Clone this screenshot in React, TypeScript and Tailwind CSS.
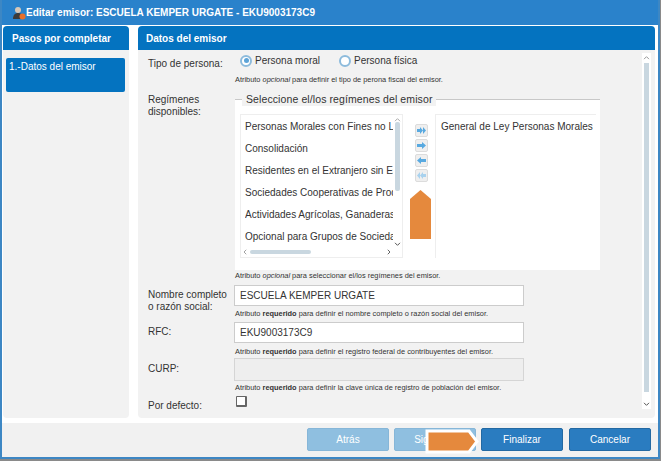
import React from 'react';

const Hint = ({ children }: { children: React.ReactNode }) => (
  <p className="text-[7.4px] leading-[9px] text-[#333] whitespace-nowrap">{children}</p>
);

const Radio = ({ checked, label }: { checked?: boolean; label: string }) => (
  <label className="flex items-center gap-[3px] text-[10px] text-[#333]">
    <span className="flex h-3 w-3 items-center justify-center rounded-full border-2 border-[#8dbbdc] bg-white">
      {checked && <span className="h-[5px] w-[5px] rounded-full bg-[#5da4d8]" />}
    </span>
    {label}
  </label>
);

const ArrowBtn = ({ d, faded }: { d: string; faded?: boolean }) => (
  <span className="flex h-[13px] w-[13px] items-center justify-center rounded-[2px] border border-[#dcdcdc] bg-[#efefef]">
    <svg viewBox="0 0 11 11" className="h-[11px] w-[11px]">
      <path d={d} fill={faded ? '#a9d2ee' : '#58a9e0'} />
    </svg>
  </span>
);

const regimenes = [
  'Personas Morales con Fines no Lucrativos',
  'Consolidación',
  'Residentes en el Extranjero sin Establecimiento',
  'Sociedades Cooperativas de Producción',
  'Actividades Agrícolas, Ganaderas, Silvícolas',
  'Opcional para Grupos de Sociedades',
];

const Scroll = () => (
  <div className="flex w-[9px] flex-col items-center bg-white">
    <span className="h-[10px]">
      <svg viewBox="0 0 8 6" className="mt-[2px] h-[5px] w-[7px]"><path d="M1 5l3-3 3 3" fill="none" stroke="#999" strokeWidth="1.2" /></svg>
    </span>
    <span className="h-[329px] w-[5px] bg-[#c9d7e0]" />
    <span className="flex flex-1 items-end pb-[2px]">
      <svg viewBox="0 0 8 6" className="h-[5px] w-[7px]"><path d="M1 1l3 3 3-3" fill="none" stroke="#555" strokeWidth="1.2" /></svg>
    </span>
  </div>
);

export default function App() {
  return (
    <div className="relative h-[461px] w-[661px] overflow-hidden bg-[#8a8a8a] font-['Liberation_Sans',Arial,sans-serif]">
      <div className="flex h-[459px] w-[660px] flex-col border-x-2 border-b-2 border-[#3d87c4] bg-white">
        <div className="flex h-[25px] shrink-0 items-center bg-[#2a82cb] pl-[10px] text-[10px] font-bold text-white">
          <svg viewBox="0 0 14 14" className="h-[14px] w-[14px]">
            <circle cx="6" cy="4" r="3" fill="#d8c8b8" />
            <path d="M1 13c0-4 2-6 5-6s5 2 5 6z" fill="#3b3b3b" />
            <circle cx="10.5" cy="10.5" r="3" fill="#e8702a" />
          </svg>
          Editar emisor: ESCUELA KEMPER URGATE - EKU9003173C9
        </div>

        <div className="flex h-[393px] shrink-0 gap-[9px] pl-[1px] pr-[3px] pt-[1px]">
          <div className="flex w-[126px] flex-col overflow-hidden rounded-t-[4px]">
            <div className="flex h-[24px] shrink-0 items-center bg-[#0473c0] pl-[9px] text-[10px] font-bold text-white">Pasos por completar</div>
            <div className="flex-1 rounded-b-[4px] bg-[#f2f2f2] pl-[3px] pr-[4px] pt-[8px]">
              <div className="h-[34px] rounded-[2px] bg-[#0473c0] pl-[3px] pt-[1px] text-[10px] leading-[16px] text-white">1.-Datos del emisor</div>
            </div>
          </div>

          <div className="flex flex-1 flex-col overflow-hidden rounded-t-[4px]">
            <div className="flex h-[24px] shrink-0 items-center bg-[#0473c0] pl-2 text-[10px] font-bold text-white">Datos del emisor</div>
            <div className="flex min-h-0 flex-1 rounded-b-[4px] bg-[#f2f2f2] pl-[10px] pr-[4px] pt-[3px]">
              <div className="min-w-0 flex-1 text-[10px] text-[#333]">
                <div className="flex h-[22px] items-start">
                  <span className="mt-[3px] w-[87px]">Tipo de persona:</span>
                  <div className="flex gap-[19px] pl-[5px]">
                    <Radio checked label="Persona moral" />
                    <Radio label="Persona física" />
                  </div>
                </div>
                <div className="ml-[87px] mb-[8px] h-[12px]"><Hint>Atributo <i>opcional</i> para definir el tipo de perona fiscal del emisor.</Hint></div>

                <div className="flex">
                  <span className="-mt-[1px] w-[87px] leading-[12px]">Regímenes<br />disponibles:</span>
                  <div className="relative mt-[4px] h-[171px] w-[365px] border-t border-[#c8c8c8] bg-white pl-[5px] pt-[14px]">
                    <span className="absolute left-[7px] top-[-8px] bg-[#f2f2f2] px-1 text-[10.5px] leading-[14px] tracking-[0.1px] whitespace-nowrap">Seleccione el/los regímenes del emisor</span>
                    <div className="flex h-[144px]">
                      <div className="flex w-[163px] border border-[#eeeeee]">
                        <div className="flex min-w-0 flex-1 flex-col">
                          <div className="min-h-0 flex-1 overflow-hidden pl-[4px] pt-[1px]">
                            {regimenes.map((r) => (
                              <div key={r} className="h-[22px] w-[149px] overflow-hidden whitespace-nowrap text-[10px] leading-[22px]">{r}</div>
                            ))}
                          </div>
                          <div className="flex h-[10px] items-center gap-[2px] pl-[2px]">
                            <svg viewBox="0 0 6 8" className="h-[6px] w-[5px]"><path d="M4 1L1 4l3 3" fill="none" stroke="#999" strokeWidth="1.2" /></svg>
                            <span className="h-[4px] w-[61px] rounded-[2px] bg-[#c9d7e0]" />
                            <span className="flex-1" />
                            <svg viewBox="0 0 6 8" className="mr-[2px] h-[6px] w-[5px]"><path d="M2 1l3 3-3 3" fill="none" stroke="#555" strokeWidth="1.2" /></svg>
                          </div>
                        </div>
                        <div className="flex w-[9px] flex-col items-center">
                          <svg viewBox="0 0 8 6" className="mt-[2px] h-[5px] w-[7px]"><path d="M1 5l3-3 3 3" fill="none" stroke="#aaa" strokeWidth="1.2" /></svg>
                          <span className="h-[69px] w-[5px] rounded-[2px] bg-[#c9d7e0]" />
                          <span className="flex-1" />
                          <svg viewBox="0 0 8 6" className="mb-[10px] h-[5px] w-[7px]"><path d="M1 1l3 3 3-3" fill="none" stroke="#555" strokeWidth="1.2" /></svg>
                        </div>
                      </div>
                      <div className="flex w-[32px] flex-col items-center gap-[2px] pl-[5px] pt-[10px]">
                        <ArrowBtn d="M1 4h3V2l3 3.5L4 9V7H1z M7 2l3 3.5L7 9z" />
                        <ArrowBtn d="M1 4h5V2l4 3.5L6 9V7H1z" />
                        <ArrowBtn d="M10 4H5V2L1 5.5 5 9V7h5z" />
                        <ArrowBtn faded d="M10 4H7V2L4 5.5 7 9V7h3z M4 2L1 5.5 4 9z" />
                      </div>
                      <div className="mr-[4px] flex-1 whitespace-nowrap border-l border-t border-[#eeeeee] pl-[5px] pt-[1px] text-[10px] leading-[22px]">General de Ley Personas Morales</div>
                    </div>
                  </div>
                </div>
                <div className="ml-[87px] mt-[1px] mb-[5px] h-[9px]"><Hint>Atributo <i>opcional</i> para seleccionar el/los regímenes del emisor.</Hint></div>

                <div className="flex h-[21px]">
                  <span className="mt-[4px] w-[86px] whitespace-nowrap leading-[12px]">Nombre completo<br />o razón social:</span>
                  <div className="flex h-[21px] w-[290px] items-center border border-[#cccccc] bg-white pl-[5px] text-[10px]">ESCUELA KEMPER URGATE</div>
                </div>
                <div className="ml-[87px] mt-[3px] mb-[4px] h-[9px]"><Hint>Atributo <b>requerido</b> para definir el nombre completo o razón social del emisor.</Hint></div>

                <div className="flex">
                  <span className="mt-[2px] w-[86px]">RFC:</span>
                  <div className="flex h-[21px] w-[290px] items-center border border-[#cccccc] bg-white pl-[5px] text-[10px]">EKU9003173C9</div>
                </div>
                <div className="ml-[87px] mt-[4px] mb-[2px] h-[9px]"><Hint>Atributo <b>requerido</b> para definir el registro federal de contribuyentes del emisor.</Hint></div>

                <div className="flex">
                  <span className="mt-[3px] w-[86px]">CURP:</span>
                  <div className="h-[23px] w-[290px] border border-[#d5d5d5] bg-[#eeeeee]" />
                </div>
                <div className="ml-[87px] mt-[2px] mb-[4px] h-[9px]"><Hint>Atributo <b>requerido</b> para definir la clave única de registro de población del emisor.</Hint></div>

                <div className="flex">
                  <span className="mt-[2px] w-[88px]">Por defecto:</span>
                  <span className="h-[11px] w-[11px] rounded-[1px] border border-b-2 border-r-2 border-[#666] bg-white" />
                </div>
              </div>
              <div className="mb-[9px] flex"><Scroll /></div>
            </div>
          </div>
        </div>

        <div className="mt-[5px] flex flex-1 items-start justify-end gap-[5px] bg-[#f1f1f1] pr-[7px] pt-[5px]">
          <button className="h-[23px] w-[82px] rounded-[2px] border border-[#86b6d8] bg-[#8fbfe0] text-[10px] text-white">Atrás</button>
          <button className="h-[23px] w-[82px] rounded-[2px] border border-[#86b6d8] bg-[#8fbfe0] text-[10px] text-white">Siguiente</button>
          <button className="h-[23px] w-[82px] rounded-[2px] border border-[#2369a3] bg-[#2a7cc0] text-[10px] text-white">Finalizar</button>
          <button className="ml-[1px] h-[23px] w-[82px] rounded-[2px] border border-[#2369a3] bg-[#2a7cc0] text-[10px] text-white">Cancelar</button>
        </div>
      </div>

      <svg viewBox="0 0 21 49" className="absolute left-[410px] top-[190px] h-[49px] w-[21px]">
        <path d="M0 9L10.5 0 21 9v40H0z" fill="#e5893d" />
      </svg>
      <svg viewBox="0 0 54 25" className="absolute left-[425px] top-[429px] h-[25px] w-[54px]">
        <path d="M2 2h42l8 10.5L44 23H2z" fill="#e5893d" stroke="#fff" strokeWidth="3" />
      </svg>
    </div>
  );
}
